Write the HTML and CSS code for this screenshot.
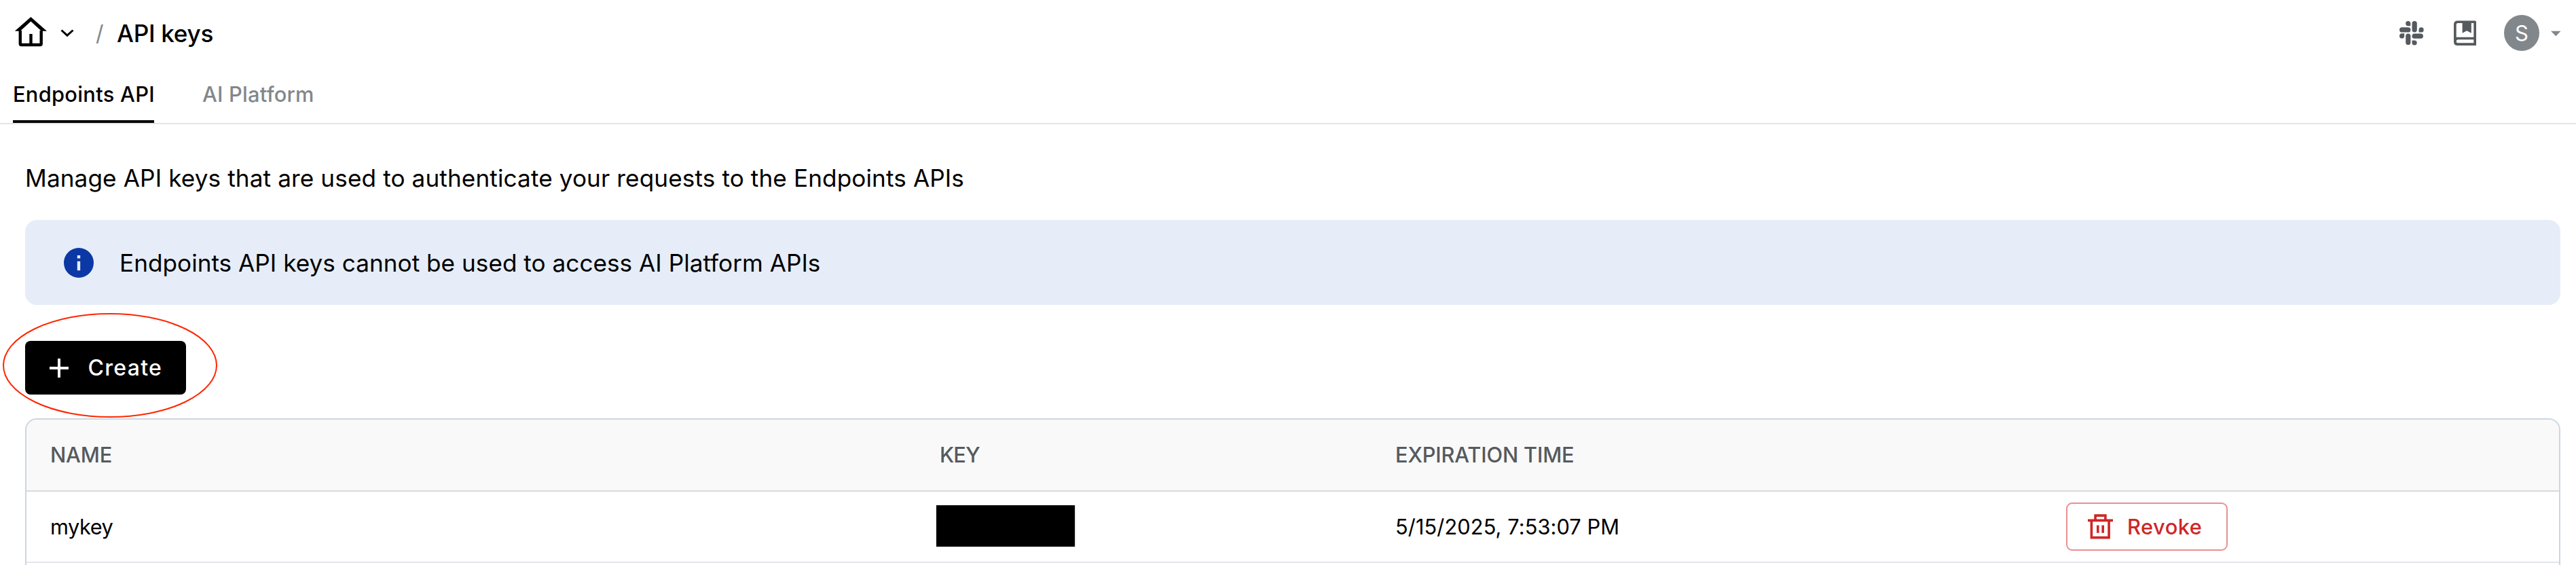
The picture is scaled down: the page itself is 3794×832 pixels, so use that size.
FILE: index.html
```
<!DOCTYPE html>
<html lang="en">
<head>
<meta charset="utf-8">
<title>API keys</title>
<link rel="stylesheet" href="styles.css">
</head>
<body>
<header class="topbar">
  <nav class="crumbs">
    <svg class="home" viewBox="0 0 48 44"><path d="M7.8 20V39.5Q7.8 41 9.3 41H37.2Q38.7 41 38.7 39.5V20" fill="none" stroke="#000" stroke-width="4.4"/><path d="M23.4 0 47 20.8H39L23.4 6.6 7.8 20.8H-.2Z"/><path d="M21.3 25h4.4v15h-4.4z"/></svg>
    <svg class="chevron" viewBox="0 0 20 12"><path d="M1.5 1.5 10 9.2 18.5 1.5" fill="none" stroke="#000" stroke-width="3"/></svg>
    <span class="slash">/</span>
    <h1 class="crumb">API keys</h1>
  </nav>
  <div class="tools">
    <svg class="slack" viewBox="0 0 36 36" fill="#555a5e"><path d="M12.7 0a3.7 3.7 0 0 1 3.6 3.7V7.2h-3.6a3.6 3.6 0 0 1 0-7.2zM7.2 19.2v-.9H3.6a3.6 3.6 0 1 0 3.6 3.6zM28.5 17V12.9a3.6 3.6 0 1 1 3.6 3.6h-3.6zM18.5 28.4h3.6a3.6 3.6 0 1 1-3.6 3.6z"/><rect x="18.5" y="0" width="7.3" height="16.4" rx="3.6"/><rect x="0" y="9.3" width="16.4" height="7.2" rx="3.6"/><rect x="9.2" y="18.6" width="7.2" height="16.4" rx="3.6"/><rect x="18.5" y="18.6" width="16.4" height="7.2" rx="3.6"/></svg>
    <svg class="book" viewBox="0 0 34 38"><path fill="#555a5e" fill-rule="evenodd" d="M5.5.4H31.2Q33 .4 33 2.2V37H5.5Q0 37 0 31.5V5.9Q0 .4 5.5.4ZM12.6 4H6Q3.7 4 3.7 6.3V24.7H29.3V4H25.8V18.7L19.2 15.3 12.6 18.7ZM6 28.3Q3.7 28.3 3.7 30.8T6 33.3H29.3V28.3Z"/></svg>
    <span class="avatar">S</span>
    <svg class="caret" viewBox="0 0 16 9"><path d="M0 .5H15.5L7.8 8.5Z" fill="#82878b"/></svg>
  </div>
</header>
<nav class="tabs">
  <a class="tab active">Endpoints API</a>
  <a class="tab platform">AI Platform</a>
</nav>
<main class="content">
  <p class="intro">Manage API keys that are used to authenticate your requests to the Endpoints APIs</p>
  <div class="notice">
    <svg class="info" viewBox="0 0 44 44"><circle cx="22" cy="22" r="22" fill="#0b38a4"/><path d="M19.8 11h4.4v4.4h-4.4zM19.8 19.8h4.4v13.4h-4.4z" fill="#e6edf8"/></svg>
    <span>Endpoints API keys cannot be used to access AI Platform APIs</span>
  </div>
  <div class="actions">
    <button class="create"><svg class="plus" viewBox="0 0 28 28"><path d="M14 0v28M0 14h28" stroke="#fff" stroke-width="4"/></svg><span>Create</span></button>
    <svg class="highlight" viewBox="0 0 316 154"><ellipse cx="158" cy="77" rx="157" ry="76" fill="none" stroke="#ff2600" stroke-width="2"/></svg>
  </div>
  <section class="table">
    <div class="row head"><span class="name-h">NAME</span><span class="key-h">KEY</span><span class="exp-h">EXPIRATION TIME</span><span></span></div>
    <div class="row">
      <span class="name">mykey</span>
      <span class="key"><i class="redacted"></i></span>
      <span class="date">5/15/2025, 7:53:07 PM</span>
      <span class="act"><button class="revoke"><svg class="trash" viewBox="0 0 37 37"><path d="M5.4 9V34.6H31.1V9M11.1 8V2.1H25.9V8" fill="none" stroke="#d02626" stroke-width="3.6"/><path d="M0 7.5h37v3.8H0zM13 16.6h3.6v11.2H13zM20.4 16.6H24v11.2h-3.6z" fill="#d02626"/></svg><span>Revoke</span></button></span>
    </div>
  </section>
</main>
</body>
</html>
```
FILE: styles.css
```
* { box-sizing: border-box; }
body { margin: 0; height: 832px; background: #fff; color: #000; font: 400 30.8px/40px Inter, sans-serif; white-space: nowrap; }
svg { display: block; flex: none; overflow: visible; }
h1, p { margin: 0; font: inherit; }
button { font: inherit; border: 0; padding: 0; display: flex; align-items: center; }

.topbar { height: 97px; padding: 0 22px; display: flex; justify-content: space-between; align-items: center; }
.crumbs, .tools { display: flex; align-items: center; }
.home { width: 48px; height: 44px; margin-top: -4px; }
.chevron { width: 20px; height: 12px; margin-left: 19px; }
.slash { margin-left: 32px; width: 13px; font-size: 32px; color: #82878b; }
.crumb { margin-left: 18px; font-size: 35.2px; font-weight: 500; letter-spacing: -.3px; }
.slack { width: 36px; height: 36px; }
.book { width: 34px; height: 38px; margin-left: 44px; }
.avatar { width: 52px; height: 53px; margin-left: 40px; border-radius: 50%; background: #82878b; color: #fff; font-size: 31px; line-height: 53px; text-align: center; }
.caret { width: 15px; height: 9px; margin: 2px 0 0 17px; }

.tabs { height: 86px; padding-left: 19px; display: flex; gap: 71px; border-bottom: 2px solid #e2e6ea; font-weight: 500; }
.tab { height: 84px; line-height: 83px; letter-spacing: .22px; color: #82878b; }
.tab.active { width: 208px; color: #000; letter-spacing: .3px; border-bottom: 4px solid #000; }

.content { padding: 59px 23px 0 37px; }
.intro { font-size: 35.2px; letter-spacing: .09px; }
.notice { height: 125px; margin-top: 42px; padding-left: 57px; display: flex; align-items: center; gap: 38px; border-radius: 17px; background: #e6edf8; font-size: 35.2px; }
.info { width: 44px; height: 44px; }
.actions { position: relative; margin-top: 53px; }
.create { width: 237px; height: 79px; padding-left: 36px; gap: 28.5px; border-radius: 8px; background: #000; color: #fff; font-size: 32px; font-weight: 500; letter-spacing: 1.3px; }
.plus { width: 28px; height: 28px; }
.highlight { position: absolute; left: -33px; top: -41px; width: 316px; height: 154px; }

.table { height: 216px; margin-top: 35px; border: 2px solid #cbd6e2; border-bottom: 0; border-radius: 17px 17px 0 0; overflow: hidden; }
.row { display: grid; grid-template-columns: 1310px 672px 988px 1fr; height: 105px; align-items: center; border-bottom: 2px solid #e2e6ea; }
.row > span { padding-left: 34px; }
.head { height: 106px; background: #f9f9f9; color: #555a5e; border-color: #dadada; font-weight: 500; }
.row > .name-h, .row > .name { padding-left: 35px; }
.name-h, .exp-h { letter-spacing: -.18px; }
.row > .key-h { padding-left: 35px; letter-spacing: -.8px; }
.name { letter-spacing: -.5px; }
.date { letter-spacing: .06px; }
.row > .key { padding-left: 30px; }
.redacted { display: block; width: 204px; height: 61px; margin-top: -2px; background: #000; box-shadow: 2px 0 0 #ececec; }
.revoke { width: 238px; height: 71px; padding-left: 30px; gap: 21px; border: 2px solid #e89090; border-radius: 9px; background: #fff; color: #d02626; font-weight: 500; letter-spacing: .5px; }
.trash { width: 37px; height: 37px; }
```
